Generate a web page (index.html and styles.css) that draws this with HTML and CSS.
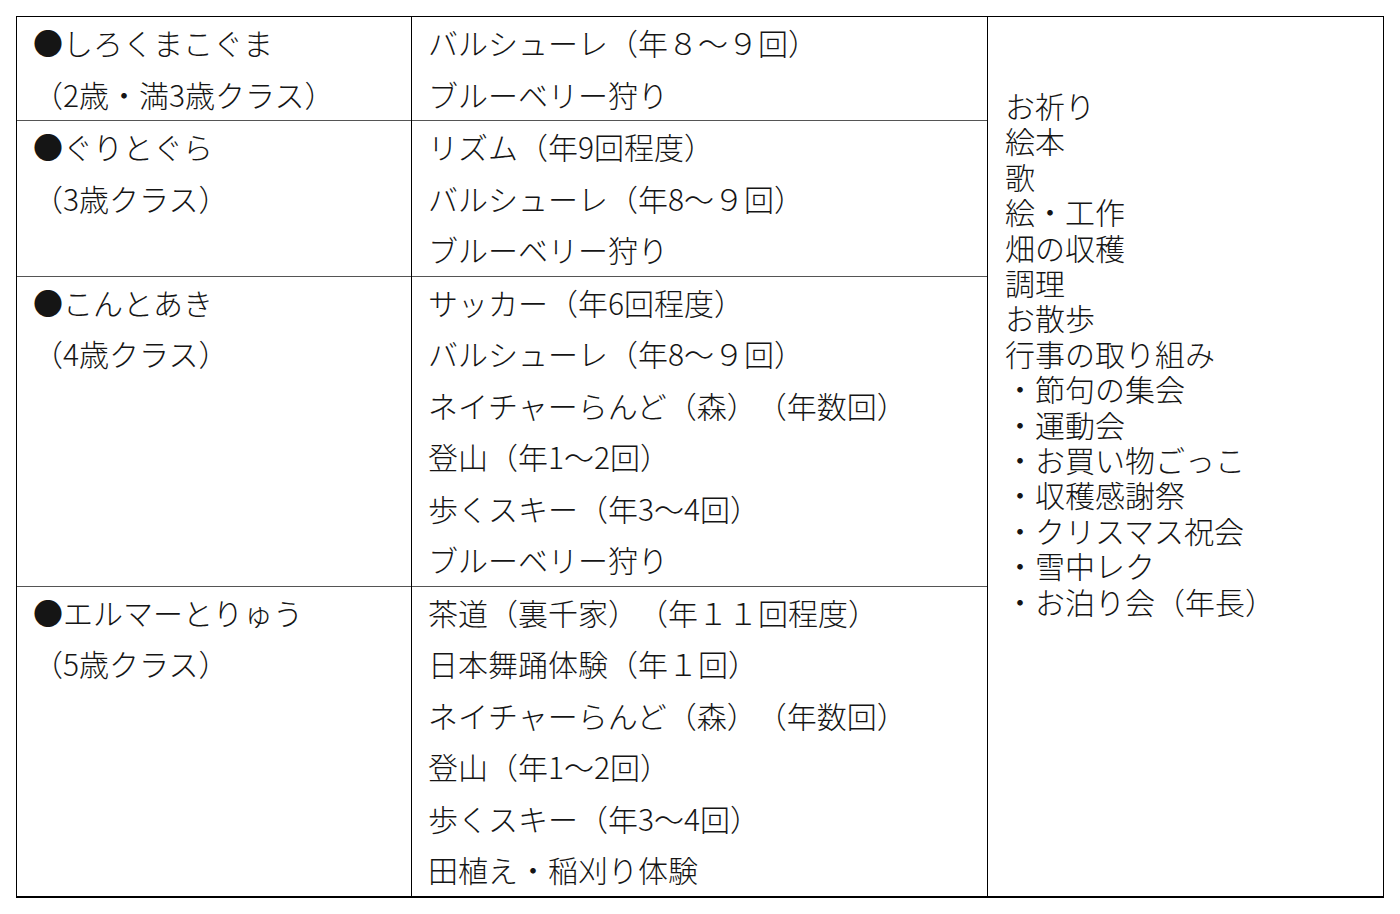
FILE: index.html
```html
<!DOCTYPE html>
<html lang="ja">
<head>
<meta charset="utf-8">
<link rel="stylesheet" href="styles.css">
</head>
<body>
<table class="plan">
  <colgroup>
    <col class="c1"><col class="c2"><col class="c3">
  </colgroup>
  <tr class="r2">
    <td class="cls">●しろくまこぐま<br>（2歳・満3歳クラス）</td>
    <td class="act">バルシューレ（年８～９回）<br>ブルーベリー狩り</td>
    <td class="daily" rowspan="4">お祈り<br>絵本<br>歌<br>絵・工作<br>畑の収穫<br>調理<br>お散歩<br>行事の取り組み<br>・節句の集会<br>・運動会<br>・お買い物ごっこ<br>・収穫感謝祭<br>・クリスマス祝会<br>・雪中レク<br>・お泊り会（年長）</td>
  </tr>
  <tr class="r3">
    <td class="cls">●ぐりとぐら<br>（3歳クラス）</td>
    <td class="act">リズム（年9回程度）<br>バルシューレ（年8～９回）<br>ブルーベリー狩り</td>
  </tr>
  <tr class="r6">
    <td class="cls">●こんとあき<br>（4歳クラス）</td>
    <td class="act">サッカー（年6回程度）<br>バルシューレ（年8～９回）<br>ネイチャーらんど（森）（年数回）<br>登山（年1～2回）<br>歩くスキー（年3～4回）<br>ブルーベリー狩り</td>
  </tr>
  <tr class="r6 last">
    <td class="cls">●エルマーとりゅう<br>（5歳クラス）</td>
    <td class="act">茶道（裏千家）（年１１回程度）<br>日本舞踊体験（年１回）<br>ネイチャーらんど（森）（年数回）<br>登山（年1～2回）<br>歩くスキー（年3～4回）<br>田植え・稲刈り体験</td>
  </tr>
</table>
</body>
</html>
```

FILE: styles.css
```css
html, body {
  margin: 0;
  padding: 0;
  background: #ffffff;
}
body {
  padding: 16px 0 0 16px;
  font-family: "Noto Sans CJK JP", "Noto Sans", sans-serif;
  font-weight: 300;
  color: #151515;
}
.plan {
  border-collapse: collapse;
  table-layout: fixed;
  width: 1367px;
  border: 1px solid #000;
  border-bottom: 2px solid #000;
  text-spacing-trim: space-all;
}
.c1 { width: 395px; }
.c2 { width: 576px; }
.c3 { width: 396px; }
.plan td {
  vertical-align: top;
  padding: 0 0 0 16px;
  font-size: 30px;
  line-height: 51.5px;
  white-space: nowrap;
  text-spacing-trim: space-all;
  border-left: 1px solid #000;
  border-right: 1px solid #000;
  border-top: 1px solid #555555;
}
.plan tr:first-child td {
  border-top: 1px solid #000;
}
.r2 { height: 102px; }
.r3 { height: 154px; }
.r6 { height: 309px; }
.plan td.daily {
  padding: 71px 0 0 17px;
  line-height: 35.4px;
}
```
